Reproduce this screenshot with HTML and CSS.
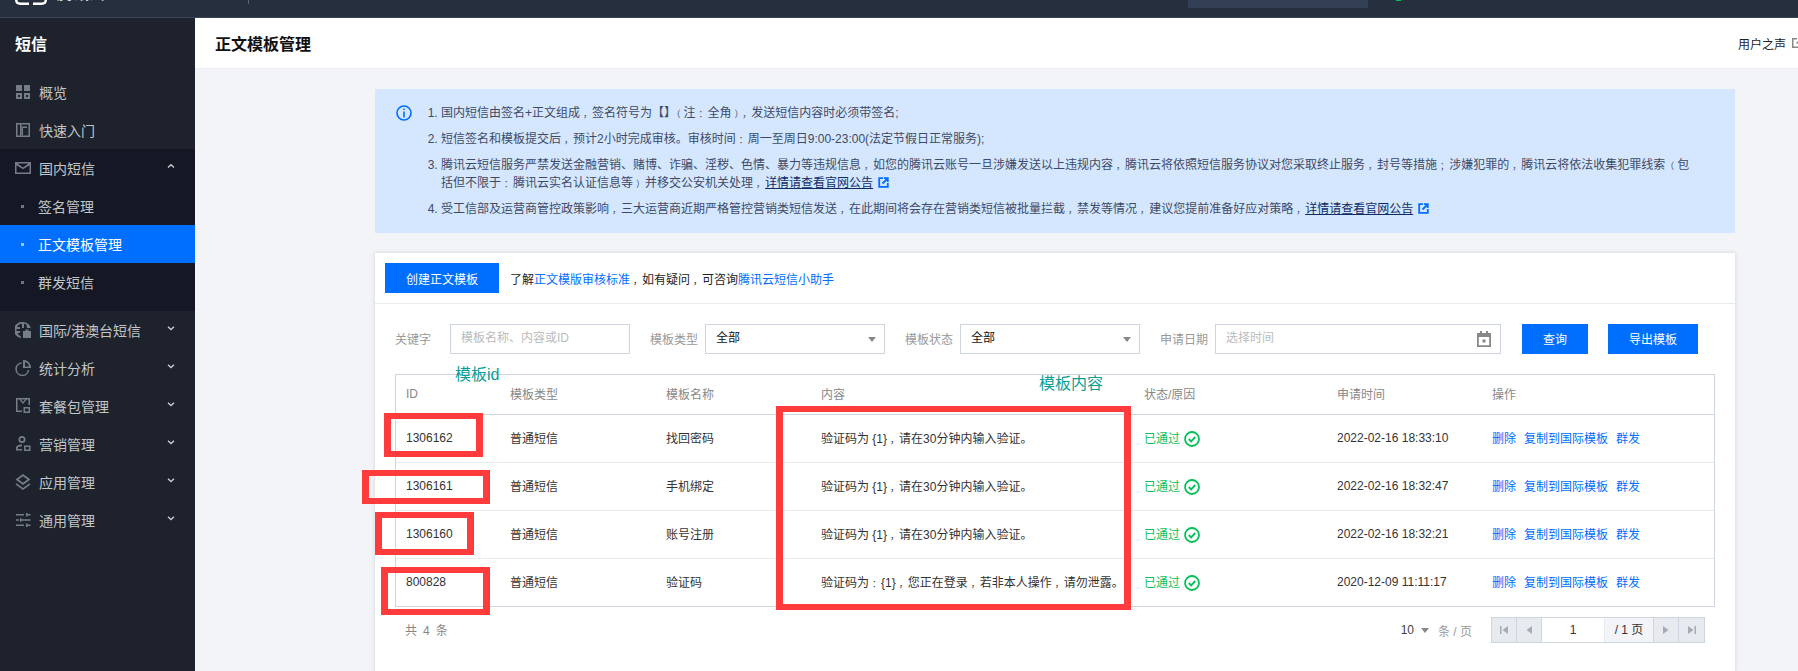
FILE: index.html
```html
<!DOCTYPE html>
<html lang="zh-CN">
<head>
<meta charset="utf-8">
<title>正文模板管理</title>
<link rel="stylesheet" href="styles.css">
</head>
<body>
<div class="page">
  <header class="topbar">
    <svg class="logo" width="32" height="5" viewBox="0 0 32 5"><path d="M1.200 0c0 2.500 2 3.700 4.300 3.700H14M18 3.700h8.500c2.300 0 4.300-1.200 4.300-3.700" fill="none" stroke="#fff" stroke-width="2.400"/></svg>
    <span class="brand">腾讯云</span>
    <span class="top-div"></span>
    <span class="top-search"></span>
    <span class="top-dot"></span>
  </header>
  <div class="body-row">
    <aside class="sidebar">
      <div class="side-title">短信</div>
      <nav class="nav">
        <a class="item"><svg class="ico" viewBox="0 0 16 16"><path d="M1 1h6v6H1zM9 1h6v6H9zM1 9h6v6H1zM9 9h6v6H9zM11 11v2h2v-2zM3 11v2h2v-2z" fill-rule="evenodd"/></svg>概览</a>
        <a class="item"><svg class="ico" viewBox="0 0 16 16"><path d="M1 1h14v14H1zM2.500 2.500v11H5v-11zM6.500 2.500V13.500h7V2.500zM8 4.500h4V6H8V13H6.800V4.500z" fill-rule="evenodd"/></svg>快速入门</a>
        <div class="group">
          <a class="item"><svg class="ico" viewBox="0 0 16 16"><path d="M0 2h16v12H0zM1.500 5.200v7.300h13V5.200L8 9.300zM2.500 3.500 8 7.500l5.500-4z" fill-rule="evenodd"/></svg>国内短信<svg class="chev" viewBox="0 0 8 8"><path d="M1 5.500 4 2.800l3 2.700" fill="none" stroke="#c8ccd2" stroke-width="1.400"/></svg></a>
          <a class="sub"><i class="dot"></i>签名管理</a>
          <a class="sub active"><i class="dot"></i>正文模板管理</a>
          <a class="sub"><i class="dot"></i>群发短信</a>
        </div>
        <a class="item"><svg class="ico" viewBox="0 0 16 16"><path d="M8 0a8 8 0 0 1 7.800 6.300L14.200 6H12l-.5-3.300A7 7 0 0 0 9 1.600V6H7V1.600C5 2 3 3 2 5h3v2H1.500v2H5v2H2.300c.8 1.500 2 2.700 3.700 3.400V16A8 8 0 0 1 8 0zM8 9h8v7H8zM10.500 9V7.500h3V9z" fill-rule="evenodd"/></svg>国际/港澳台短信<svg class="chev" viewBox="0 0 8 8"><path d="M1 2.800 4 5.500l3-2.700" fill="none" stroke="#c8ccd2" stroke-width="1.400"/></svg></a>
        <a class="item"><svg class="ico" viewBox="0 0 16 16"><path d="M6.500 2.200v1.600A5.500 5.500 0 1 0 12.800 10h1.500A7 7 0 1 1 6.500 2.200zM8.500 0A7.500 7.500 0 0 1 16 7.500v.500H8V0zM10 2v4.500h4.200A6 6 0 0 0 10 2z" fill-rule="evenodd"/></svg>统计分析<svg class="chev" viewBox="0 0 8 8"><path d="M1 2.800 4 5.500l3-2.700" fill="none" stroke="#c8ccd2" stroke-width="1.400"/></svg></a>
        <a class="item"><svg class="ico" viewBox="0 0 16 16"><path d="M1 0h14v7h-1.500V1.500h-1.800L8 6 4.300 1.500H2.500v11H7V14H1zM6 1.500 8 4l2-2.500zM8.500 9H15v6H8.500zM10 10.500V13.500h3.500V10.500z" fill-rule="evenodd"/></svg>套餐包管理<svg class="chev" viewBox="0 0 8 8"><path d="M1 2.800 4 5.500l3-2.700" fill="none" stroke="#c8ccd2" stroke-width="1.400"/></svg></a>
        <a class="item"><svg class="ico" viewBox="0 0 16 16"><path d="M7 0a3.500 3.500 0 1 1 0 7 3.500 3.500 0 0 1 0-7zM7 1.700a1.800 1.800 0 1 0 0 3.600 1.800 1.800 0 0 0 0-3.600zM1 14.500V11.500C1 10 3.500 8.500 7 8.500v1.700c-2.500 0-4.300 1-4.300 1.500v1.200H7v1.600zM9 9.500h6.500V15H9zM10.500 11v2.500H14V11z" fill-rule="evenodd"/></svg>营销管理<svg class="chev" viewBox="0 0 8 8"><path d="M1 2.800 4 5.500l3-2.700" fill="none" stroke="#c8ccd2" stroke-width="1.400"/></svg></a>
        <a class="item"><svg class="ico" viewBox="0 0 16 16"><path d="M8 0l7.500 5.500L8 11 .5 5.500zM8 2.200 3.500 5.500 8 8.800l4.500-3.300zM1.500 9.300 8 14l6.500-4.700L15.500 10.500 8 16 .5 10.500z" fill-rule="evenodd"/></svg>应用管理<svg class="chev" viewBox="0 0 8 8"><path d="M1 2.800 4 5.500l3-2.700" fill="none" stroke="#c8ccd2" stroke-width="1.400"/></svg></a>
        <a class="item"><svg class="ico" viewBox="0 0 16 16"><path d="M1 2h8v1.600H1zM11 1h1.500v1h3v1.600h-3v1H11zM1 7.200h3v1.600H1zM5 6.200h1.500v1h9v1.600h-9v1H5zM1 12.400h8V14H1zM11 11.400h1.500v1h3V14h-3v1H11z"/></svg>通用管理<svg class="chev" viewBox="0 0 8 8"><path d="M1 2.800 4 5.500l3-2.700" fill="none" stroke="#c8ccd2" stroke-width="1.400"/></svg></a>
      </nav>
    </aside>
    <main class="main">
      <div class="head">
        <h1 class="head-title">正文模板管理</h1>
        <span class="voice">用户之声<svg class="voice-ico" viewBox="0 0 12 12"><path d="M1 1h5v1.500H2.500v7h7V6H11v5H1zM7 1h4v4H9.500V3.500L6 7 5 6l3.500-3.500H7z"/></svg></span>
      </div>
      <div class="content">
        <section class="notice">
          <svg class="info-ico" viewBox="0 0 16 16"><circle cx="8" cy="8" r="7" fill="none" stroke="#006eff" stroke-width="1.600"/><path d="M7.200 3.500h1.600v1.600H7.200zM7.200 6.500h1.600v6H7.200z" fill="#006eff"/></svg>
          <ol class="notes">
            <li>国内短信由签名+正文组成<span class="pr">，</span>签名符号为【】<span class="pl">（</span>注<span class="pr">：</span>全角<span class="pr">）</span><span class="pr">，</span>发送短信内容时必须带签名;</li>
            <li>短信签名和模板提交后<span class="pr">，</span>预计2小时完成审核。审核时间<span class="pr">：</span>周一至周日9:00-23:00(法定节假日正常服务);</li>
            <li>腾讯云短信服务严禁发送金融营销、赌博、诈骗、淫秽、色情、暴力等违规信息<span class="pr">，</span>如您的腾讯云账号一旦涉嫌发送以上违规内容<span class="pr">，</span>腾讯云将依照短信服务协议对您采取终止服务<span class="pr">，</span>封号等措施<span class="pr">；</span>涉嫌犯罪的<span class="pr">，</span>腾讯云将依法收集犯罪线索<span class="pl">（</span>包<br>括但不限于<span class="pr">：</span>腾讯云实名认证信息等<span class="pr">）</span>并移交公安机关处理<span class="pr">，</span><a class="ulink">详情请查看官网公告</a><svg class="ext" viewBox="0 0 11 11"><path fill="none" stroke="#006eff" stroke-width="1.800" d="M5 1.200H1.200v8.600h8.600V6"/><path fill="none" stroke="#006eff" stroke-width="1.800" d="M4.500 6.500 9 2M6 1.200h3.800V5"/></svg></li>
            <li>受工信部及运营商管控政策影响<span class="pr">，</span>三大运营商近期严格管控营销类短信发送<span class="pr">，</span>在此期间将会存在营销类短信被批量拦截<span class="pr">，</span>禁发等情况<span class="pr">，</span>建议您提前准备好应对策略<span class="pr">，</span><a class="ulink">详情请查看官网公告</a><svg class="ext" viewBox="0 0 11 11"><path fill="none" stroke="#006eff" stroke-width="1.800" d="M5 1.200H1.200v8.600h8.600V6"/><path fill="none" stroke="#006eff" stroke-width="1.800" d="M4.500 6.500 9 2M6 1.200h3.800V5"/></svg></li>
          </ol>
        </section>
        <section class="card">
          <div class="toolbar">
            <button class="btn btn-create">创建正文模板</button>
            <span class="tip">了解<a class="link">正文模版审核标准</a><span class="pr">，</span>如有疑问<span class="pr">，</span>可咨询<a class="link">腾讯云短信小助手</a></span>
          </div>
          <div class="filters">
            <label class="field"><span class="flabel">关键字</span><span class="ctl ctl-180 ph">模板名称、内容或ID</span></label>
            <label class="field"><span class="flabel">模板类型</span><span class="ctl ctl-180">全部<i class="caret"></i></span></label>
            <label class="field"><span class="flabel">模板状态</span><span class="ctl ctl-180">全部<i class="caret"></i></span></label>
            <label class="field"><span class="flabel">申请日期</span><span class="ctl ctl-286 ph">选择时间<svg class="cal" viewBox="0 0 14 16"><path d="M3 0h2v2h4V0h2v2h3v14H0V2h3zM1.800 6v8.200h10.400V6zM5.500 8.500h3v3h-3z" fill="#888" fill-rule="evenodd"/></svg></span></label>
            <button class="btn btn-q">查询</button>
            <button class="btn btn-x">导出模板</button>
          </div>
          <table class="tbl">
            <colgroup><col class="c1"><col class="c2"><col class="c3"><col class="c4"><col class="c5"><col class="c6"><col class="c7"></colgroup>
            <thead><tr><th>ID</th><th>模板类型</th><th>模板名称</th><th>内容</th><th>状态/原因</th><th>申请时间</th><th>操作</th></tr></thead>
            <tbody>
              <tr><td>1306162</td><td>普通短信</td><td>找回密码</td><td>验证码为 {1}<span class="pr">，</span>请在30分钟内输入验证。</td><td class="ok">已通过<svg class="check" viewBox="0 0 16 16"><circle cx="8" cy="8" r="7" fill="none" stroke="#0abf5b" stroke-width="1.800"/><path d="M4.800 8l2.300 2.300 4.200-4.300" fill="none" stroke="#0abf5b" stroke-width="1.900"/></svg></td><td>2022-02-16 18:33:10</td><td class="ops"><a>删除</a><a>复制到国际模板</a><a>群发</a></td></tr>
              <tr><td>1306161</td><td>普通短信</td><td>手机绑定</td><td>验证码为 {1}<span class="pr">，</span>请在30分钟内输入验证。</td><td class="ok">已通过<svg class="check" viewBox="0 0 16 16"><circle cx="8" cy="8" r="7" fill="none" stroke="#0abf5b" stroke-width="1.800"/><path d="M4.800 8l2.300 2.300 4.200-4.300" fill="none" stroke="#0abf5b" stroke-width="1.900"/></svg></td><td>2022-02-16 18:32:47</td><td class="ops"><a>删除</a><a>复制到国际模板</a><a>群发</a></td></tr>
              <tr><td>1306160</td><td>普通短信</td><td>账号注册</td><td>验证码为 {1}<span class="pr">，</span>请在30分钟内输入验证。</td><td class="ok">已通过<svg class="check" viewBox="0 0 16 16"><circle cx="8" cy="8" r="7" fill="none" stroke="#0abf5b" stroke-width="1.800"/><path d="M4.800 8l2.300 2.300 4.200-4.300" fill="none" stroke="#0abf5b" stroke-width="1.900"/></svg></td><td>2022-02-16 18:32:21</td><td class="ops"><a>删除</a><a>复制到国际模板</a><a>群发</a></td></tr>
              <tr><td>800828</td><td>普通短信</td><td>验证码</td><td>验证码为<span class="pr">：</span>{1}<span class="pr">，</span>您正在登录<span class="pr">，</span>若非本人操作<span class="pr">，</span>请勿泄露。</td><td class="ok">已通过<svg class="check" viewBox="0 0 16 16"><circle cx="8" cy="8" r="7" fill="none" stroke="#0abf5b" stroke-width="1.800"/><path d="M4.800 8l2.300 2.300 4.200-4.300" fill="none" stroke="#0abf5b" stroke-width="1.900"/></svg></td><td>2020-12-09 11:11:17</td><td class="ops"><a>删除</a><a>复制到国际模板</a><a>群发</a></td></tr>
            </tbody>
          </table>
          <div class="foot">
            <span class="total">共<span class="count">4</span>条</span>
            <div class="pagination">
              <span class="size">10<i class="caret caret-inline"></i></span><span class="per">条 / 页</span>
              <div class="pager">
                <span class="pbtn"><svg class="pi" viewBox="0 0 10 10"><path d="M1 1h1.500v8H1zM9 1v8L3.500 5z"/></svg></span>
                <span class="pbtn"><svg class="pi" viewBox="0 0 10 10"><path d="M8 1v8L2.500 5z"/></svg></span>
                <span class="pinput">1</span>
                <span class="ptotal">/ 1 页</span>
                <span class="pbtn"><svg class="pi" viewBox="0 0 10 10"><path d="M2 1v8l5.500-4z"/></svg></span>
                <span class="pbtn"><svg class="pi" viewBox="0 0 10 10"><path d="M1 1v8l5.500-4zM7.500 1H9v8H7.500z"/></svg></span>
              </div>
            </div>
          </div>
        </section>
      </div>
    </main>
  </div>
  <span class="note note-id">模板id</span>
  <span class="note note-content">模板内容</span>
  <div class="rbox r1"></div>
  <div class="rbox r2"></div>
  <div class="rbox r3"></div>
  <div class="rbox r4"></div>
  <div class="rbox r5"></div>
</div>
</body>
</html>
```

FILE: styles.css
```css
* { box-sizing: border-box; }
html, body { margin: 0; padding: 0; }
body {
  font-family: "Liberation Sans", "Noto Sans CJK SC", sans-serif;
  font-size: 12px;
  color: #444;
  background: #f2f4f8;
}
.page { position: relative; width: 1798px; height: 671px; overflow: hidden; display: flex; flex-direction: column; }

/* full-width punctuation set smaller and centred inside its 12px slot */
.pr { font-size: 9px; line-height: 0; margin-left: 3px; }
.pl { font-size: 9px; line-height: 0; margin-right: 3px; }

/* top bar */
.topbar { flex: none; height: 18px; background: #262f3e; border-bottom: 1px solid #3a4557; display: flex; align-items: flex-start; overflow: hidden; }
.logo { flex: none; margin-left: 15px; }
.brand { flex: none; margin: -17px 0 0 10px; width: 132px; color: #d8dbe0; font-size: 16px; line-height: 22px; font-weight: 700; }
.top-div { flex: none; width: 1px; height: 4px; background: #5a6474; margin-left: 59px; }
.top-search { flex: none; width: 180px; height: 8px; background: #333f55; margin-left: 939px; }
.top-dot { flex: none; width: 5px; height: 1px; background: #0abf5b; margin-left: 28px; }

.body-row { flex: 1; display: flex; min-height: 0; }

/* sidebar */
.sidebar { flex: none; width: 195px; background: #1e222d; }
.side-title { height: 54px; line-height: 54px; padding-left: 15px; color: #fff; font-size: 16px; font-weight: 700; }
.nav { padding-top: 1px; }
.item { display: flex; align-items: center; height: 38px; padding-left: 15px; color: #c1c6c8; font-size: 14px; position: relative; }
.ico { flex: none; width: 16px; height: 16px; margin-right: 8px; fill: #767d88; }
.chev { position: absolute; left: 167px; top: 13px; width: 8px; height: 8px; }
.group { background: #151824; padding-bottom: 10px; }
.sub { display: flex; align-items: center; height: 38px; padding-left: 21px; color: #c1c6c8; font-size: 14px; }
.dot { flex: none; width: 3px; height: 3px; background: #6f7682; margin-right: 14px; }
.sub.active { background: #006eff; color: #fff; }
.sub.active .dot { background: #9cc6ff; }

/* main */
.main { flex: 1; min-width: 0; }
.head { height: 51px; background: #fff; border-bottom: 1px solid #eeeff2; display: flex; align-items: center; justify-content: space-between; padding: 0 0 0 20px; }
.head-title { margin: 0; font-size: 16px; font-weight: 700; color: #111; }
.voice { display: flex; align-items: center; margin-right: -5px; color: #222; font-size: 12px; }
.voice-ico { width: 12px; height: 12px; margin-left: 5px; fill: #888; }
.content { padding: 20px 63px 0 180px; }

/* notice */
.notice { display: flex; align-items: flex-start; height: 144px; background: #d5e7ff; padding: 15px 35px 0 21px; color: #3e4a66; }
.info-ico { flex: none; width: 16px; height: 16px; margin: 1px 16px 0 0; }
.notes { margin: 0; padding: 0 0 0 13px; flex: 1; list-style: decimal; }
.notes li { line-height: 18px; margin-bottom: 8px; }
.ulink { color: #0f2c66; text-decoration: underline; }
.ext { width: 11px; height: 11px; margin-left: 5px; vertical-align: -1px; }

/* card */
.card { margin-top: 20px; height: 420px; background: #fff; box-shadow: 0 0 4px rgba(54, 58, 80, .18); }
.toolbar { height: 51px; padding: 10px; display: flex; align-items: center; border-bottom: 1px solid #e7eaef; }
.btn { border: 0; background: #006eff; color: #fff; font: inherit; height: 30px; padding: 0; }
.btn-create { width: 114px; }
.tip { margin-left: 11px; color: #222; }
.link { color: #006eff; }
.filters { display: flex; align-items: center; gap: 20px; padding: 20px 20px 0; }
.filters .btn { padding-bottom: 2px; }
.field { display: flex; align-items: center; gap: 7px; }
.flabel { width: 48px; color: #999; padding-bottom: 2px; }
.ctl { position: relative; display: block; height: 30px; line-height: 26px; border: 1px solid #cfd5de; background: #fff; padding-left: 10px; color: #111; }
.ctl-180 { width: 180px; }
.ctl-286 { width: 286px; }
.ph { color: #bbb; }
.caret { position: absolute; right: 8px; top: 12px; width: 0; height: 0; border-left: 4px solid transparent; border-right: 4px solid transparent; border-top: 5px solid #888; }
.caret-inline { position: static; display: inline-block; margin-left: 7px; vertical-align: 1px; }
.cal { position: absolute; right: 9px; top: 6px; width: 14px; height: 16px; }
.btn-q { width: 66px; margin-left: 1px; }
.btn-x { width: 90px; }

/* table */
.tbl { width: 1320px; margin: 20px 20px 0; border: 1px solid #cfd5de; border-collapse: separate; border-spacing: 0; table-layout: fixed; }
.c1 { width: 104px; } .c2 { width: 156px; } .c3 { width: 155px; } .c4 { width: 323px; } .c5 { width: 193px; } .c6 { width: 155px; } .c7 { width: 232px; }
.tbl th { height: 40px; padding: 0 10px 2px; text-align: left; font-weight: 400; color: #888; border-bottom: 1px solid #cfd5de; }
.tbl td { height: 48px; padding: 0 10px 2px; color: #333; border-bottom: 1px solid #e7eaef; white-space: nowrap; }
.tbl tbody tr:last-child td { border-bottom: 0; height: 47px; }
.tbl td.ok { color: #0abf5b; }
.check { width: 16px; height: 16px; margin-left: 4px; vertical-align: -4px; }
.ops a { color: #006eff; margin-right: 8px; }

/* footer */
.foot { display: flex; justify-content: space-between; align-items: center; margin: 10px 20px 0; padding: 0 10px; height: 26px; }
.total { color: #888; padding-bottom: 2px; }
.count { margin: 0 6px; }
.pagination { display: flex; align-items: center; }
.size { color: #444; }
.per { color: #999; margin-left: 9px; }
.pager { display: flex; height: 26px; margin-left: 19px; border: 1px solid #cfd5de; background: #fff; }
.pbtn { width: 25px; display: flex; align-items: center; justify-content: center; background: #e7eaef; border-right: 1px solid #cfd5de; }
.pbtn:last-child { border-right: 0; }
.pi { width: 10px; height: 10px; fill: #a6acb6; }
.pinput { width: 62px; text-align: center; line-height: 24px; color: #333; }
.ptotal { width: 50px; text-align: center; line-height: 24px; color: #333; background: #f2f4f8; border-left: 1px solid #e7eaef; border-right: 1px solid #cfd5de; }

/* screenshot annotations */
.note { position: absolute; color: #0b9e96; font-size: 16px; line-height: 20px; }
.note-id { left: 455px; top: 365px; }
.note-content { left: 1039px; top: 374px; }
.rbox { position: absolute; border: 6px solid #ff3b3b; border-left-width: 7px; border-right-width: 7px; }
.r1 { left: 384px; top: 413px; width: 99px; height: 44px; }
.r2 { left: 362px; top: 470px; width: 128px; height: 34px; }
.r3 { left: 375px; top: 512px; width: 99px; height: 43px; }
.r4 { left: 381px; top: 567px; width: 109px; height: 48px; }
.r5 { left: 776px; top: 406px; width: 355px; height: 204px; }
```
